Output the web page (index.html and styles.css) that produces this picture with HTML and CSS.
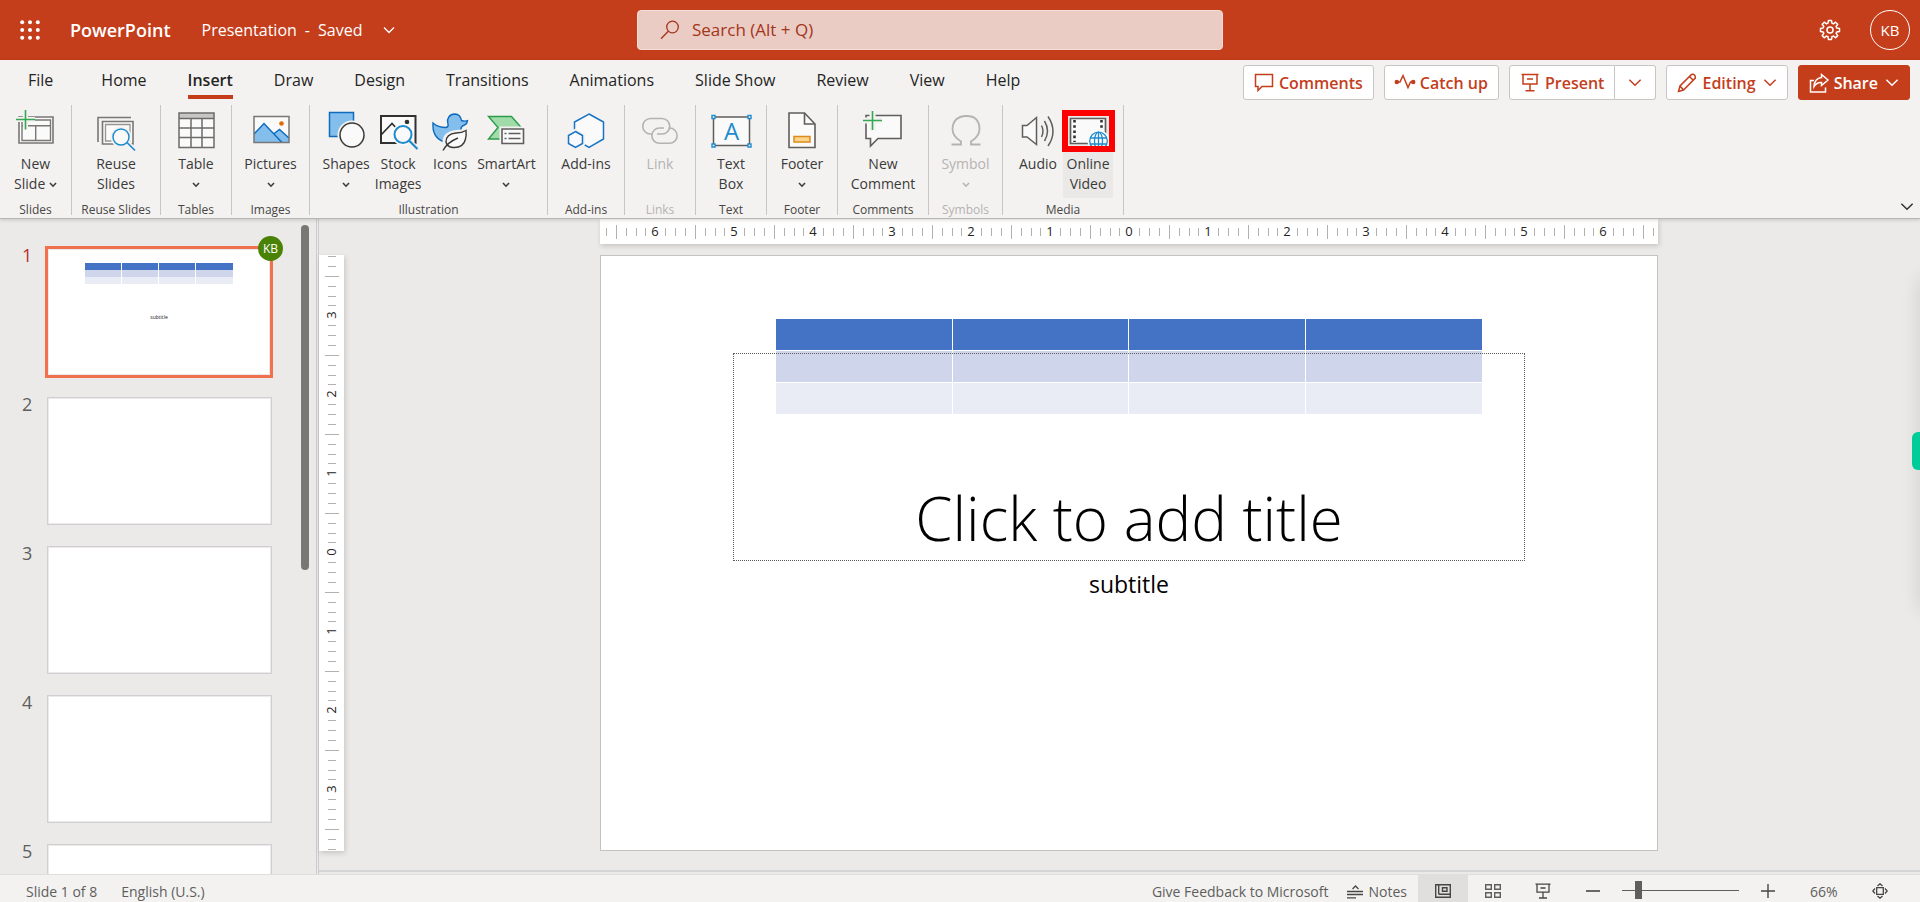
FILE: index.html
```html
<!DOCTYPE html>
<html lang="en">
<head>
<meta charset="utf-8">
<title>Presentation - PowerPoint</title>
<link rel="stylesheet" href="styles.css">
</head>
<body>
<svg class="sprite" aria-hidden="true">
  <symbol id="chev" viewBox="0 0 12 8"><path d="M1 1.500l5 5 5-5" fill="none" stroke="currentColor" stroke-width="1.300"/></symbol>
  <symbol id="chev-sm" viewBox="0 0 8 6"><path d="M1 1l3 3.200 3-3.200" fill="none" stroke="currentColor" stroke-width="1.600"/></symbol>
</svg>

<header class="titlebar">
  <button class="icon-btn waffle" aria-label="App launcher">
    <svg width="20" height="20" viewBox="0 0 20 20" fill="#fff"><circle cx="2.200" cy="2.200" r="2"/><circle cx="10" cy="2.200" r="2"/><circle cx="17.800" cy="2.200" r="2"/><circle cx="2.200" cy="10" r="2"/><circle cx="10" cy="10" r="2"/><circle cx="17.800" cy="10" r="2"/><circle cx="2.200" cy="17.800" r="2"/><circle cx="10" cy="17.800" r="2"/><circle cx="17.800" cy="17.800" r="2"/></svg>
  </button>
  <span class="app-name">PowerPoint</span>
  <button class="doc-name"><span>Presentation</span><span>-</span><span>Saved</span><svg width="12" height="8"><use href="#chev"/></svg></button>
  <div class="search">
    <svg width="20" height="20" viewBox="0 0 20 20" fill="none" stroke="#a33419" stroke-width="1.300"><circle cx="12.500" cy="7" r="5.800"/><path d="M8.300 11.300L1 18.800"/></svg>
    <input type="search" aria-label="Search" placeholder="Search (Alt + Q)">
  </div>
  <div class="title-right">
    <button class="icon-btn" aria-label="Settings">
      <svg width="22" height="22" viewBox="0 0 22 22" fill="none" stroke="#fff" stroke-width="1.500" stroke-linejoin="round"><path d="M9.500 1.500h3l.4 2.600 1.500.7 2.200-1.600 2.100 2.100-1.600 2.200.7 1.500 2.700.5v3l-2.700.4-.7 1.500 1.600 2.200-2.100 2.100-2.200-1.600-1.500.7-.4 2.700h-3l-.5-2.700-1.500-.7-2.200 1.600-2.100-2.100 1.600-2.200-.7-1.500-2.600-.4v-3l2.600-.5.7-1.500-1.600-2.200 2.100-2.100 2.200 1.600 1.500-.7z"/><circle cx="11" cy="11" r="3"/></svg>
    </button>
    <button class="avatar" aria-label="Account">KB</button>
  </div>
</header>

<section class="ribbon">
  <div class="tab-row">
    <nav class="tabs" role="tablist" aria-label="Ribbon">
      <button role="tab" class="tab tab-file">File</button>
      <button role="tab" class="tab">Home</button>
      <button role="tab" class="tab tab-active" aria-selected="true">Insert</button>
      <button role="tab" class="tab">Draw</button>
      <button role="tab" class="tab">Design</button>
      <button role="tab" class="tab">Transitions</button>
      <button role="tab" class="tab">Animations</button>
      <button role="tab" class="tab">Slide Show</button>
      <button role="tab" class="tab">Review</button>
      <button role="tab" class="tab">View</button>
      <button role="tab" class="tab">Help</button>
    </nav>
    <div class="actions">
      <button class="action"><svg width="20" height="20" viewBox="0 0 20 20"><path d="M1.500 1.500h17v12h-10.500l-4 4v-4h-2.500z"/></svg>Comments</button>
      <button class="action"><svg width="20" height="20" viewBox="0 0 20 20"><path d="M2 9h3L8 2.500l5 12 2.500-5.500h2.500"/><circle cx="1.800" cy="9" r="1.500" fill="currentColor"/><circle cx="18.200" cy="9" r="1.500" fill="currentColor"/></svg>Catch up</button>
      <div class="split">
        <button class="action"><svg width="20" height="20" viewBox="0 0 20 20"><path d="M1.500 1.500h17M3 1.500v9.500h14V1.500M7 6h6M10 11v6.500M5.500 17.700h9"/></svg>Present</button>
        <button class="action action-more" aria-label="Present options"><svg width="14" height="9"><use href="#chev"/></svg></button>
      </div>
      <button class="action"><svg width="20" height="20" viewBox="0 0 20 20"><path d="M1.500 18.500l1.500-5.500L14.500 1.500q1.800-.8 3 .5t.8 3L6.500 17zM12.500 3.500l3.800 3.800M3 13l3.500 4"/></svg>Editing<svg width="14" height="9"><use href="#chev"/></svg></button>
      <button class="action action-primary"><svg width="20" height="20" viewBox="0 0 20 20"><path d="M5 7.500H1.500V19h15v-4.500M12.500 1.500L19 7l-6.500 5.500V9.500Q8 9 5 13.500 5.500 5.500 12.500 4.500z"/></svg>Share<svg width="14" height="9"><use href="#chev"/></svg></button>
    </div>
  </div>

  <div class="groups">
    <div class="group g-slides"><div class="tools">
      <button class="tool"><svg class="ico" viewBox="3 0 40 40" fill="none"><path d="M6 7h34v26H6z" fill="#fafafa" stroke="#797775" stroke-width="1.600"/><path d="M9 10h28.500v20.500H9z" stroke="#797775" stroke-width="1.400"/><path d="M9 15.700h28.500M22.700 15.700V30" stroke="#797775" stroke-width="1.400"/><path d="M12.500 0v19.500M3 9.500h19" stroke="#f3f2f1" stroke-width="5"/><path d="M12.500 0v19.500M3 9.500h19" stroke="#36a853" stroke-width="1.600"/></svg><span>New<br>Slide <svg width="8" height="6"><use href="#chev-sm"/></svg></span></button>
    </div><span class="group-name">Slides</span></div>

    <div class="group g-reuse"><div class="tools">
      <button class="tool"><svg class="ico" viewBox="0 0 40 40" fill="none"><path d="M2 32V7.500h33" stroke="#797775" stroke-width="1.600"/><path d="M6.500 11.500h30.500v22.500H6.500z" fill="#fafafa" stroke="#797775" stroke-width="1.600"/><path d="M9.500 14.500h24.500v16.500H9.500z" stroke="#979593" stroke-width="1.300"/><circle cx="25" cy="27" r="10.500" fill="#f3f2f1"/><path d="M31 32.500l8 8" stroke="#f3f2f1" stroke-width="5"/><circle cx="25" cy="27" r="8" fill="#fafafa" stroke="#1e8bcd" stroke-width="1.500"/><path d="M31 32.500l8 8" stroke="#1e8bcd" stroke-width="1.700"/></svg><span>Reuse<br>Slides</span></button>
    </div><span class="group-name">Reuse Slides</span></div>

    <div class="group g-tables"><div class="tools">
      <button class="tool"><svg class="ico" viewBox="0 0 40 40" fill="none"><path d="M3 3h35v34.500H3z" fill="#fafafa"/><path d="M3 3h35v5.500H3z" fill="#c8c6c4"/><path d="M3 3h35v34.500H3zM3 8.500h35M3 18h35M3 27.500h35M15 8.500v29M26 8.500v29" stroke="#6d6b69" stroke-width="1.500"/></svg><span>Table<br><svg width="8" height="6"><use href="#chev-sm"/></svg></span></button>
    </div><span class="group-name">Tables</span></div>

    <div class="group g-images"><div class="tools">
      <button class="tool"><svg class="ico" viewBox="0 0 40 40" fill="none"><path d="M3 6.500h35v26H3z" fill="#fafafa"/><path d="M3 24l10-10.500 9 10 6.500-4 9.500 8.500v4.500H3z" fill="#83beec"/><path d="M3 24l10-10.500 18 19M22.500 24l6-4.500L38 28" stroke="#0f6cbd" stroke-width="1.500"/><circle cx="30.500" cy="13.500" r="2.300" fill="#e06c00"/><path d="M3 6.500h35v26H3z" stroke="#797775" stroke-width="1.500"/></svg><span>Pictures<br><svg width="8" height="6"><use href="#chev-sm"/></svg></span></button>
    </div><span class="group-name">Images</span></div>

    <div class="group g-illus"><div class="tools tools-gap">
      <button class="tool"><svg class="ico" viewBox="0 0 40 40" fill="none"><path d="M3.500 2.500h24v24h-24z" fill="#83beec" stroke="#0f6cbd" stroke-width="1.500"/><circle cx="26" cy="25" r="14.500" fill="#f3f2f1"/><circle cx="26" cy="25" r="12" fill="#fafafa" stroke="#3b3a39" stroke-width="1.500"/></svg><span>Shapes<br><svg width="8" height="6"><use href="#chev-sm"/></svg></span></button>
      <button class="tool"><svg class="ico" viewBox="0 0 40 40" fill="none"><path d="M3 6h34.500v27H3z" fill="#fafafa" stroke="#323130" stroke-width="2"/><path d="M3 25l11-11.500 14 15" stroke="#323130" stroke-width="1.700"/><circle cx="29" cy="12" r="2.300" fill="#323130"/><circle cx="25" cy="24.500" r="11" fill="#fafafa"/><path d="M31 30.500l8.500 8.500" stroke="#f3f2f1" stroke-width="5"/><circle cx="25" cy="24.500" r="8.500" fill="#fafafa" stroke="#1e8bcd" stroke-width="2"/><path d="M31 30.500l8.500 8.500" stroke="#1e8bcd" stroke-width="2.200"/></svg><span>Stock<br>Images</span></button>
      <button class="tool"><svg class="ico" viewBox="0 0 40 40" fill="none"><path d="M3 13q5 4.500 13 4.500 3-.5 1.800-4.500-.8-3.500 1-6 2-3 6-3 5.700.3 6.700 6.500 3 1.200 6 .2-.5 4-4.500 5-2.500 1.300-2 4.300 1 8-6 11.500H13Q2 27 3 13z" fill="#83beec" stroke="#0f6cbd" stroke-width="1.400"/><path d="M36.500 20q-4 2.500-10 2.500-11 1-11.500 9 .5 5.500 7 6.500 12 1 14-9 1-5 .5-9z" fill="#fafafa" stroke="#f3f2f1" stroke-width="5"/><path d="M36 20.500q-4 2.500-10 2.500-10 1-10 9 1 5 7 5.500 10.500.5 12.500-8.500 1-4.500.5-8.500z" fill="#fafafa" stroke="#3b3a39" stroke-width="1.400"/><path d="M13 40.500q4-8 15-12.500" stroke="#3b3a39" stroke-width="1.400"/></svg><span>Icons</span></button>
      <button class="tool"><svg class="ico" viewBox="0 0 40 40" fill="none"><path d="M2.500 6.500h23L36.500 19l-9 10h-25L12 17.500z" fill="#a0dcaa" stroke="#2e9b4a" stroke-width="1.400"/><path d="M13.500 16.500h27V36h-27z" fill="#f3f2f1"/><path d="M16 19h21.500v14.500H16z" fill="#fafafa" stroke="#605e5c" stroke-width="1.600"/><path d="M18.500 23.500h2M18.500 28.500h2M22.500 23.500h12M22.500 28.500h12" stroke="#605e5c" stroke-width="1.300"/></svg><span>SmartArt<br><svg width="8" height="6"><use href="#chev-sm"/></svg></span></button>
    </div><span class="group-name">Illustration</span></div>

    <div class="group g-addins"><div class="tools">
      <button class="tool"><svg class="ico" viewBox="0 0 40 40" fill="none" stroke="#1a74c4" stroke-width="1.500"><path d="M23 4l14.500 8v17L23 37.500 8.500 29V12z" fill="#fafafa"/><path d="M9.500 18.500l9.500 5.500v11l-9.500 5.500L0 35V24z" fill="#f3f2f1" stroke="none"/><path d="M9.500 21.500l7 4v8l-7 4-7-4v-8z" fill="#fafafa"/></svg><span>Add-ins</span></button>
    </div><span class="group-name">Add-ins</span></div>

    <div class="group g-link"><div class="tools">
      <button class="tool" disabled><svg class="ico" viewBox="0 0 40 40" fill="none" stroke="#b5b3b1" stroke-width="1.600"><path d="M12 24h-1.500a7.700 7.700 0 0 1 0-15.500h11.500a7.700 7.700 0 0 1 0 15.500H17"/><path d="M28.500 18h1a7.600 7.600 0 0 1 0 15.300H19.500A7.600 7.600 0 0 1 19.500 18H24"/></svg><span>Link</span></button>
    </div><span class="group-name muted">Links</span></div>

    <div class="group g-link"><div class="tools">
      <button class="tool"><svg class="ico" viewBox="0 0 40 40" fill="none"><path d="M2.500 7h36v28.500h-36z" fill="#fafafa" stroke="#605e5c" stroke-width="1.500"/><g fill="#fff" stroke="#1e8bcd" stroke-width="1.400"><path d="M1 5.500h3v3H1zM37 5.500h3v3h-3zM1 34h3v3H1zM37 34h3v3h-3z"/></g><text x="20.500" y="30" text-anchor="middle" font-size="24" fill="#1e8bcd">A</text></svg><span>Text<br>Box</span></button>
    </div><span class="group-name">Text</span></div>

    <div class="group g-link"><div class="tools">
      <button class="tool"><svg class="ico" viewBox="0 0 40 40" fill="none"><path d="M7 3h15.500l10.500 11v23.500H7z" fill="#fafafa" stroke="#605e5c" stroke-width="1.600"/><path d="M22.500 3v11H33" stroke="#605e5c" stroke-width="1.600"/><path d="M12 26.500h16v5.500H12z" fill="#fbd58b" stroke="#dd8a1c" stroke-width="1.500"/></svg><span>Footer<br><svg width="8" height="6"><use href="#chev-sm"/></svg></span></button>
    </div><span class="group-name">Footer</span></div>

    <div class="group g-comment"><div class="tools">
      <button class="tool"><svg class="ico" viewBox="0 0 40 40" fill="none"><path d="M3 5.500h35v23H15L7.500 36v-7.500H3z" fill="#fafafa" stroke="#605e5c" stroke-width="1.600"/><path d="M9.500 1v19M0 10.500h19" stroke="#f3f2f1" stroke-width="6"/><path d="M9.500 1v19M0 10.500h19" stroke="#36a853" stroke-width="1.600"/></svg><span>New<br>Comment</span></button>
    </div><span class="group-name">Comments</span></div>

    <div class="group g-symbol"><div class="tools">
      <button class="tool" disabled><svg class="ico" viewBox="0 0 40 40" fill="none" stroke="#b5b3b1" stroke-width="1.800"><path d="M5.500 34.500h9.500v-3Q6.500 26.500 6.500 19 7 6.500 20 6t13.500 13q0 7.500-8.500 12.500v3h9.500"/></svg><span>Symbol<br><svg width="8" height="6"><use href="#chev-sm"/></svg></span></button>
    </div><span class="group-name muted">Symbols</span></div>

    <div class="group g-media"><div class="tools">
      <button class="tool"><svg class="ico" viewBox="0 0 40 40" fill="none" stroke="#605e5c" stroke-width="1.500"><path d="M4.500 15.500H9l9.500-8v27L9 27H4.500z" fill="#fafafa"/><path d="M23.500 15.500q3 5.500 0 11.500M26.500 11q6 10 0 20M30 6.500q10 15 0 29.500"/></svg><span>Audio</span></button>
      <button class="tool tool-hot"><svg class="ico" viewBox="0 0 40 40" fill="none"><path d="M2.500 8.500h35v25h-35z" fill="#fafafa" stroke="#605e5c" stroke-width="1.700"/><path d="M6.500 10v22M33.500 10v10" stroke="#323130" stroke-width="2.600" stroke-dasharray="2.600 2.600"/><circle cx="30.500" cy="31" r="11" fill="#fafafa"/><g stroke="#1e8bcd" stroke-width="1.300"><circle cx="30.500" cy="31" r="8.800"/><ellipse cx="30.500" cy="31" rx="4" ry="8.800"/><path d="M30.500 22v18M22 28h17M22 34h17"/></g></svg><span>Online<br>Video</span><i class="callout"></i></button>
    </div><span class="group-name">Media</span></div>
    <button class="collapse" aria-label="Collapse ribbon"><svg width="14" height="9"><use href="#chev"/></svg></button>
  </div>
</section>

<main class="workspace">
  <aside class="panel" aria-label="Slides">
    <ol class="thumbs">
      <li class="thumb-row thumb-current"><span class="num">1</span>
        <div class="thumb"><table class="mini" aria-hidden="true"><tr><td><td><td><td></tr><tr><td><td><td><td></tr><tr><td><td><td><td></tr></table><span class="mini-sub">subtitle</span></div>
        <span class="presence">KB</span></li>
      <li class="thumb-row"><span class="num">2</span><div class="thumb"></div></li>
      <li class="thumb-row"><span class="num">3</span><div class="thumb"></div></li>
      <li class="thumb-row"><span class="num">4</span><div class="thumb"></div></li>
      <li class="thumb-row"><span class="num">5</span><div class="thumb"></div></li>
    </ol>
    <div class="scroll"></div>
  </aside>

  <section class="editor">
    <svg class="ruler ruler-h" aria-hidden="true">
      <defs>
        <pattern id="ticks-h" x="0" y="0" width="79" height="25" patternUnits="userSpaceOnUse"><path d="M10 9h1v8h-1zM20 9h1v8h-1zM30 9h1v8h-1zM40 6h1v14h-1zM50 9h1v8h-1zM60 9h1v8h-1zM69 9h1v8h-1z" fill="#b3b0ad"/></pattern>
        <pattern id="ticks-v" x="0" y="-1" width="25" height="79" patternUnits="userSpaceOnUse"><path d="M9 10h8v1H9zM9 20h8v1H9zM9 30h8v1H9zM6 40h14v1H6zM9 50h8v1H9zM9 60h8v1H9zM9 69h8v1H9z" fill="#b3b0ad"/></pattern>
      </defs>
      <svg x="50%" overflow="visible">
        <rect x="-526" width="1052" height="25" fill="url(#ticks-h)"/>
        <g text-anchor="middle"><text x="-474" y="17">6</text><text x="-395" y="17">5</text><text x="-316" y="17">4</text><text x="-237" y="17">3</text><text x="-158" y="17">2</text><text x="-79" y="17">1</text><text x="0" y="17">0</text><text x="79" y="17">1</text><text x="158" y="17">2</text><text x="237" y="17">3</text><text x="316" y="17">4</text><text x="395" y="17">5</text><text x="474" y="17">6</text></g>
      </svg>
    </svg>
    <svg class="ruler ruler-v" aria-hidden="true">
      <svg y="50%" overflow="visible">
        <rect y="-297" width="25" height="595" fill="url(#ticks-v)"/>
        <g text-anchor="middle" transform="rotate(-90)"><text x="238" y="17">3</text><text x="159" y="17">2</text><text x="80" y="17">1</text><text x="1" y="17">0</text><text x="-78" y="17">1</text><text x="-157" y="17">2</text><text x="-236" y="17">3</text></g>
      </svg>
    </svg>
    <article class="slide">
      <table class="slide-table" aria-label="Empty table"><tr><td><td><td><td></tr><tr><td><td><td><td></tr><tr><td><td><td><td></tr></table>
      <div class="title-box"><h1>Click to add title</h1></div>
      <p class="subtitle">subtitle</p>
    </article>
    <div class="side-glow"></div>
    <button class="side-tab" aria-label="Open side panel"></button>
  </section>
</main>

<footer class="status">
  <button class="st st-first">Slide 1 of 8</button>
  <button class="st">English (U.S.)</button>
  <div class="status-right">
    <button class="st">Give Feedback to Microsoft</button>
    <button class="st st-notes"><svg width="16" height="14" viewBox="0 0 16 14" fill="none" stroke="#484644" stroke-width="1.300"><path d="M5.500 4l3-3 3 3M0 6.500h16M0 9.500h16M0 12.800h9"/></svg>Notes</button>
    <button class="view view-on" aria-label="Normal view"><svg width="16" height="14" viewBox="0 0 16 14" fill="none" stroke="#484644" stroke-width="1.400"><path d="M.7.700h14.600v12.600H.7zM3.700.700v9.600M3.700 10.300h11.600M7.500 3.700h4.500v3.500H7.500z"/></svg></button>
    <button class="view" aria-label="Slide sorter"><svg width="16" height="14" viewBox="0 0 16 14" fill="none" stroke="#605e5c" stroke-width="1.400"><path d="M.7.700h5.600v4.600H.7zM9.700.700h5.600v4.600H9.700zM.7 8.700h5.600v4.600H.7zM9.700 8.700h5.600v4.600H9.700z"/></svg></button>
    <button class="view" aria-label="Slide show"><svg width="16" height="16" viewBox="0 0 16 16" fill="none" stroke="#484644" stroke-width="1.300"><path d="M.5 1.200h15M2 1.200v8h12v-8M5.500 5h5M8 9.200v5.300M4 15h8"/></svg></button>
    <button class="view" aria-label="Zoom out"><svg width="14" height="14" viewBox="0 0 14 14" stroke="#484644" stroke-width="1.600"><path d="M0 7h14"/></svg></button>
    <input class="zoom" type="range" min="10" max="400" value="56" aria-label="Zoom">
    <button class="view" aria-label="Zoom in"><svg width="14" height="14" viewBox="0 0 14 14" stroke="#484644" stroke-width="1.400"><path d="M0 7h14M7 0v14"/></svg></button>
    <button class="st st-pct">66%</button>
    <button class="view" aria-label="Fit to window"><svg width="16" height="16" viewBox="0 0 16 16" fill="none" stroke="#484644" stroke-width="1.300"><path d="M4.700 4.700h6.600v6.600H4.700zM5.500 3L8 .800 10.500 3M5.500 13L8 15.200l2.500-2.200M3 5.500L.800 8 3 10.500M13 5.500L15.200 8 13 10.500"/></svg></button>
  </div>
</footer>
</body>
</html>
```
FILE: styles.css
```css
* { box-sizing: border-box; }

html, body { height: 100%; }

body {
  margin: 0;
  display: flex;
  flex-direction: column;
  overflow: hidden;
  background: #ebeae8;
  color: #323130;
  font: 14px/20px "Open Sans", "Noto Sans", sans-serif;
}

button {
  font: inherit;
  color: inherit;
  margin: 0;
  padding: 0;
  border: 0;
  background: none;
  white-space: nowrap;
}

.sprite { position: absolute; width: 0; height: 0; }

/* Title bar */
.titlebar {
  position: relative;
  flex: none;
  display: flex;
  align-items: center;
  height: 60px;
  padding: 0 10px 0 10px;
  background: #c43e1c;
  color: #fff;
  font-size: 16px;
}
.icon-btn { display: flex; align-items: center; justify-content: center; width: 40px; height: 40px; }
.app-name { margin-left: 20px; font-size: 18px; font-weight: 600; }
.doc-name { display: flex; align-items: center; gap: 8px; margin-left: 31px; }
.doc-name svg { margin-left: 13px; }
.search {
  position: absolute;
  left: 50%;
  top: 10px;
  display: flex;
  align-items: center;
  width: 586px;
  height: 40px;
  margin-left: -323px;
  padding-left: 22px;
  gap: 12px;
  border: 1px solid #f3ddd7;
  border-radius: 4px;
  background: #eaccc4;
}
.search input {
  flex: 1;
  padding: 0;
  border: 0;
  outline: 0;
  background: none;
  color: #a33419;
  font: inherit;
  font-size: 17px;
}
.search input::placeholder { color: #a33419; opacity: 1; }
.title-right { display: flex; align-items: center; gap: 20px; margin-left: auto; }
.avatar { width: 40px; height: 40px; border: 1px solid #fff; border-radius: 50%; font-size: 15px; }

/* Ribbon */
.ribbon {
  position: relative;
  z-index: 2;
  flex: none;
  background: #f3f2f1;
  border-bottom: 1px solid #b8b6b4;
  box-shadow: 0 1px 4px rgba(0, 0, 0, .16);
}
.tab-row { display: flex; justify-content: space-between; height: 45px; padding-right: 10px; }
.tabs { display: flex; gap: 41px; padding-left: 28px; }
.tab { height: 39px; padding-top: 5px; border-bottom: 4px solid transparent; font-size: 16px; color: #252423; }
.tab-file { margin-right: 7px; }
.tab-active { font-weight: 600; border-color: #c43e1c; }

.actions { display: flex; gap: 10px; padding-top: 5px; }
.action {
  display: flex;
  align-items: center;
  gap: 5px;
  height: 35px;
  padding: 0 10px;
  border: 1px solid #c8c6c4;
  border-radius: 3px;
  background: #fff;
  color: #c43e1c;
  font-size: 16px;
  font-weight: 600;
}
.action svg { fill: none; stroke: currentColor; stroke-width: 1.500; overflow: visible; }
.action svg:last-child:not(:first-child) { margin-left: 2px; }
.split { display: flex; }
.split .action:first-child { border-radius: 3px 0 0 3px; }
.action-more { width: 41px; justify-content: center; border-left: 0; border-radius: 0 3px 3px 0; }
.action-primary { background: #c43e1c; border-color: #c43e1c; color: #fff; }

.groups { display: flex; height: 113px; padding-bottom: 3px; }
.group {
  flex: none;
  display: flex;
  flex-direction: column;
  align-items: center;
  justify-content: space-between;
  border-right: 1px solid #c8c6c4;
}
.tools { display: flex; align-items: flex-start; padding-top: 5px; }
.tools-gap { gap: 2px; }
.tool {
  position: relative;
  display: flex;
  flex-direction: column;
  align-items: center;
  gap: 4px;
  min-width: 50px;
  min-height: 88px;
  color: #3b3a39;
}
.tool:disabled { color: #b5b3b1; }
.tool span svg { vertical-align: middle; }
.ico { width: 40px; height: 40px; overflow: visible; }
.tool-hot { background: #eae9e7; }
.callout { position: absolute; inset: 0 -2px auto -1px; height: 42px; border: 6px solid #f00; }
.group-name { font-size: 12px; line-height: 16px; height: 13px; color: #484644; }
.group-name.muted { color: #b5b3b1; }
.g-slides { width: 72px; }
.g-reuse { width: 89px; }
.g-tables { width: 71px; }
.g-images { width: 78px; }
.g-illus { width: 238px; }
.g-addins { width: 77px; }
.g-link { width: 71px; }
.g-comment { width: 91px; }
.g-symbol { width: 74px; }
.g-media { width: 121px; }
.collapse { align-self: flex-end; margin: 0 6px 0 auto; color: #323130; line-height: 0; }
.collapse svg { margin-bottom: 4px; }

/* Slide list */
.workspace { flex: 1; display: flex; min-height: 0; }
.panel {
  flex: none;
  display: flex;
  align-items: flex-start;
  justify-content: space-between;
  width: 319px;
  padding-right: 7px;
  overflow: hidden;
  border-right: 3px double #cbcdd0;
}
.thumbs { margin: 0; padding: 29px 0 0 22px; list-style: none; }
.thumb-row { position: relative; display: flex; gap: 14px; height: 149px; }
.num { width: 11px; font-size: 18px; line-height: 15px; color: #605e5c; }
.thumb {
  width: 225px;
  height: 128px;
  border: 1px solid #d0d0d4;
  background: #fff;
  box-shadow: inset 0 0 0 1px #ebeae9;
}
.thumb-current .num { color: #b7312c; }
.thumb-current .thumb {
  width: 228px;
  height: 132px;
  margin: -2px 0 0 -2px;
  padding-top: 13px;
  border: 3px solid #f0704f;
  text-align: center;
}
.mini { width: 149px; margin: 1px auto 0; border-spacing: 0; border-collapse: collapse; table-layout: fixed; }
.mini td { height: 7px; padding: 0; border-right: 1px solid #fff; background: #e9ebf5; }
.mini tr:nth-child(1) td { background: #4472c4; }
.mini tr:nth-child(2) td { background: #cfd5ea; }
.mini-sub { display: block; margin-top: 29px; font-size: 5px; line-height: 8px; color: #111; }
.presence {
  position: absolute;
  top: -12px;
  right: -10px;
  width: 25px;
  height: 25px;
  border-radius: 50%;
  background: #498205;
  color: #fff;
  font-size: 12px;
  line-height: 25px;
  text-align: center;
}
.scroll { width: 8px; height: 345px; margin-top: 6px; border-radius: 4px; background: #797775; }

/* Canvas */
.editor {
  position: relative;
  flex: 1;
  display: grid;
  grid-template-columns: 25px 256fr 1058fr 262fr;
  grid-template-rows: 25px auto 1fr;
  row-gap: 11px;
  min-width: 0;
  margin-bottom: 2px;
  border-bottom: 2px solid #d2d4d6;
}
.ruler { width: 100%; height: 100%; background: #fff; box-shadow: 1px 2px 5px rgba(0, 0, 0, .16); font-size: 13px; fill: #252423; }
.ruler-h { grid-column: 3; }
.ruler-v { grid-column: 1; grid-row: 2; }
.slide {
  position: relative;
  grid-column: 3;
  grid-row: 2;
  aspect-ratio: 1058 / 596;
  border: 1px solid #c3c3c3;
  background: #fff;
  color: #000;
}
.slide-table { width: 67%; margin: 62px auto 0; border-spacing: 1px; table-layout: fixed; }
.slide-table td { height: 31px; padding: 0; background: #e9ebf5; }
.slide-table tr:nth-child(1) td { background: #4472c4; }
.slide-table tr:nth-child(2) td { background: #cfd5ea; }
.title-box {
  position: absolute;
  left: 12.500%;
  right: 12.500%;
  top: 97px;
  height: 208px;
  display: flex;
  align-items: flex-end;
  justify-content: center;
  border: 1px dotted #605e5c;
}
.title-box h1 { margin: 0; font-size: 60px; line-height: 84px; font-weight: 300; white-space: nowrap; }
.subtitle { position: absolute; left: 0; right: 0; top: 313px; margin: 0; font-size: 23px; line-height: 30px; text-align: center; }
.side-glow { position: absolute; right: -20px; top: 60px; width: 20px; height: 330px; box-shadow: 0 0 20px rgba(0, 0, 0, .12); }
.side-tab { position: absolute; right: 0; top: 213px; width: 8px; height: 38px; border-radius: 6px 0 0 6px; background: #00cc99; }

/* Status bar */
.status {
  flex: none;
  display: flex;
  align-items: center;
  height: 28px;
  padding-left: 26px;
  gap: 24px;
  overflow: hidden;
  border-top: 1px solid #e1dfdd;
  background: #f3f2f1;
  color: #605e5c;
}
.st { height: 28px; padding-top: 6px; }
.status-right { display: flex; align-items: center; margin-left: auto; padding-right: 15px; }
.st-notes { display: flex; align-items: center; gap: 6px; margin: 0 11px 0 18px; }
.view { display: flex; align-items: center; justify-content: center; width: 50px; height: 28px; padding-top: 5px; }
.view-on { background: #e1dfdd; }
.st-pct { width: 45px; margin-left: 17px; text-align: left; }
.zoom { width: 117px; height: 18px; margin: 3px 4px 0; appearance: none; background: linear-gradient(#605e5c, #605e5c) center / 100% 1px no-repeat; }
.zoom::-webkit-slider-thumb { appearance: none; width: 7px; height: 18px; background: #605e5c; }
.zoom::-moz-range-thumb { width: 7px; height: 18px; border: 0; border-radius: 0; background: #605e5c; }
```
